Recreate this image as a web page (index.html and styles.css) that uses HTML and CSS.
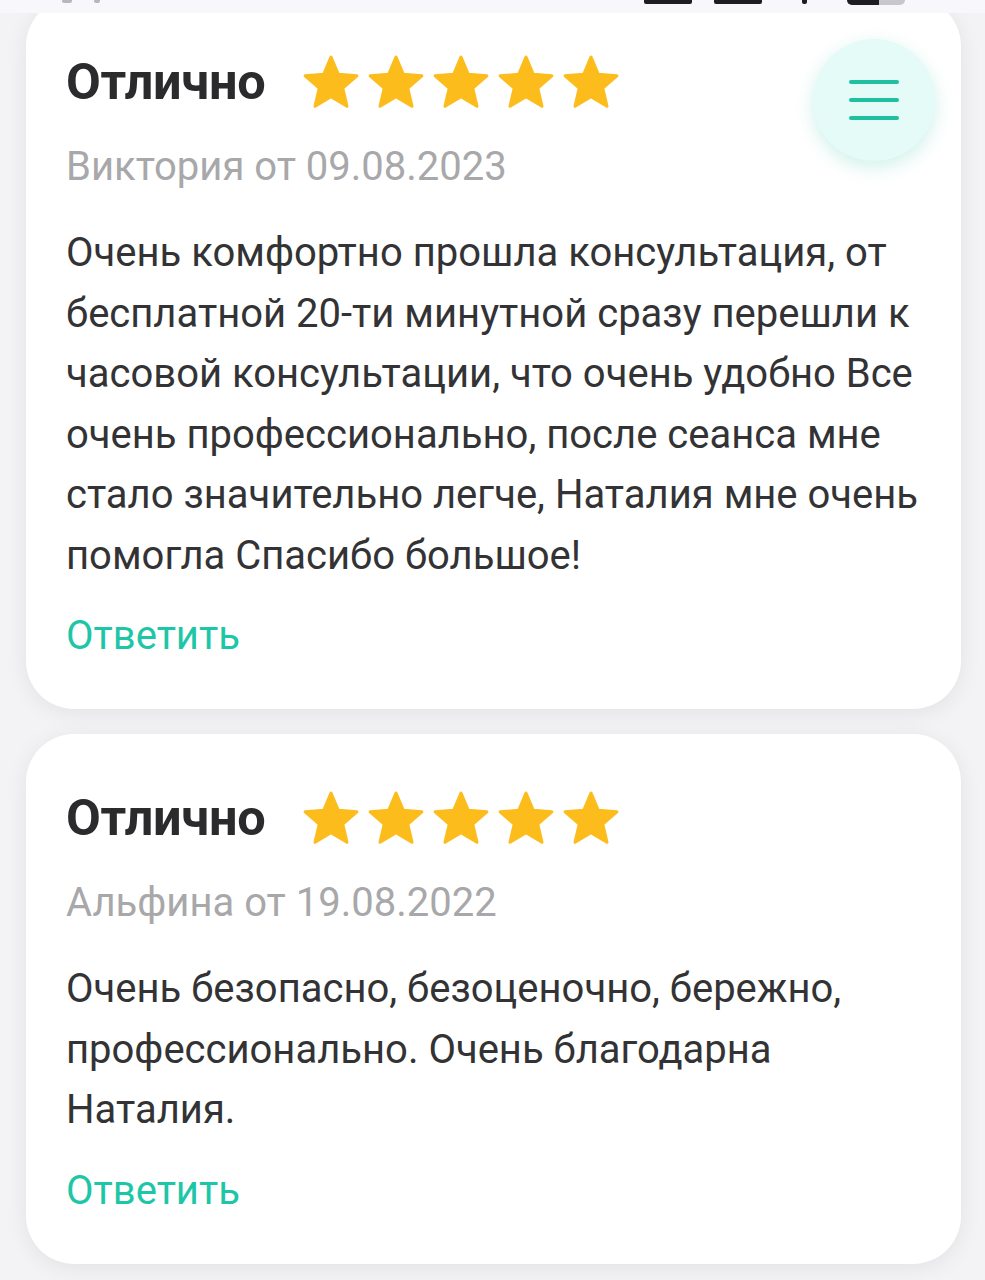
FILE: index.html
```html
<!DOCTYPE html>
<html lang="ru">
<head>
<meta charset="utf-8">
<title>Отзывы</title>
<link rel="stylesheet" href="styles.css">
</head>
<body>
<div class="statusbar">
  <div class="sb-left"><span class="sb-dot w10"></span><span class="sb-dot w6"></span></div>
  <div class="sb-right">
    <span class="sb-bit w48"></span>
    <span class="sb-bit w48"></span>
    <span class="sb-bit w5"></span>
    <span class="sb-batt"><span class="sb-batt-fill"></span></span>
  </div>
</div>

<button class="menu-btn" aria-label="Меню">
  <span class="bar"></span><span class="bar"></span><span class="bar"></span>
</button>

<main class="list">
  <article class="card">
    <header class="head">
      <h2 class="title">Отлично</h2>
      <div class="stars">
        <svg viewBox="0 0 24 24"><path d="M12 17.27L18.18 21l-1.64-7.03L22 9.24l-7.19-.61L12 2 9.19 8.63 2 9.24l5.46 4.730L5.82 21z"/></svg>
        <svg viewBox="0 0 24 24"><path d="M12 17.27L18.18 21l-1.64-7.03L22 9.24l-7.19-.61L12 2 9.19 8.63 2 9.24l5.46 4.73L5.82 21z"/></svg>
        <svg viewBox="0 0 24 24"><path d="M12 17.27L18.18 21l-1.64-7.03L22 9.24l-7.19-.61L12 2 9.19 8.63 2 9.24l5.46 4.73L5.82 21z"/></svg>
        <svg viewBox="0 0 24 24"><path d="M12 17.27L18.18 21l-1.64-7.03L22 9.24l-7.19-.61L12 2 9.19 8.63 2 9.24l5.46 4.73L5.82 21z"/></svg>
        <svg viewBox="0 0 24 24"><path d="M12 17.27L18.18 21l-1.64-7.03L22 9.24l-7.19-.61L12 2 9.19 8.63 2 9.24l5.46 4.73L5.82 21z"/></svg>
      </div>
    </header>
    <p class="meta">Виктория от 09.08.2023</p>
    <p class="text">Очень комфортно прошла консультация, от бесплатной 20-ти минутной сразу перешли к часовой консультации, что очень удобно Все очень профессионально, после сеанса мне стало значительно легче, Наталия мне очень помогла Спасибо большое!</p>
    <a class="reply" href="#">Ответить</a>
  </article>

  <article class="card">
    <header class="head">
      <h2 class="title">Отлично</h2>
      <div class="stars">
        <svg viewBox="0 0 24 24"><path d="M12 17.27L18.18 21l-1.64-7.03L22 9.24l-7.19-.61L12 2 9.19 8.63 2 9.24l5.46 4.73L5.82 21z"/></svg>
        <svg viewBox="0 0 24 24"><path d="M12 17.27L18.18 21l-1.64-7.03L22 9.24l-7.19-.61L12 2 9.19 8.63 2 9.24l5.46 4.73L5.82 21z"/></svg>
        <svg viewBox="0 0 24 24"><path d="M12 17.27L18.18 21l-1.64-7.03L22 9.24l-7.19-.61L12 2 9.19 8.63 2 9.24l5.46 4.73L5.82 21z"/></svg>
        <svg viewBox="0 0 24 24"><path d="M12 17.27L18.18 21l-1.64-7.03L22 9.24l-7.19-.61L12 2 9.19 8.63 2 9.24l5.46 4.73L5.82 21z"/></svg>
        <svg viewBox="0 0 24 24"><path d="M12 17.27L18.18 21l-1.64-7.03L22 9.24l-7.19-.61L12 2 9.19 8.63 2 9.24l5.46 4.73L5.82 21z"/></svg>
      </div>
    </header>
    <p class="meta">Альфина от 19.08.2022</p>
    <p class="text">Очень безопасно, безоценочно, бережно, профессионально. Очень благодарна Наталия.</p>
    <a class="reply" href="#">Ответить</a>
  </article>
</main>
</body>
</html>
```
FILE: styles.css
```css
* { box-sizing: border-box; }

html, body {
  margin: 0;
  padding: 0;
  background: #f3f3f5;
  font-family: Roboto, "Noto Sans", "Liberation Sans", sans-serif;
  -webkit-font-smoothing: antialiased;
}

.statusbar {
  position: fixed;
  top: 0;
  left: 0;
  right: 0;
  height: 13px;
  background: #f8f8fc;
  z-index: 10;
  display: flex;
  justify-content: space-between;
  padding: 0 80px 0 62px;
}
.sb-left, .sb-right { display: flex; gap: 22px; align-items: flex-start; }
.sb-dot { display: block; height: 3px; background: #b8b8bc; border-radius: 0 0 2px 2px; }
.sb-dot.w10 { width: 10px; }
.sb-dot.w6 { width: 6px; }
.sb-bit { display: block; height: 4px; background: #1e1e22; border-radius: 0 0 2px 2px; }
.sb-bit.w48 { width: 48px; }
.sb-bit.w5 { width: 5px; margin: 0 18px; }
.sb-batt {
  display: block; width: 58px; height: 5px;
  background: #c8c8cc; border-radius: 0 0 6px 6px; overflow: hidden;
}
.sb-batt-fill { display: block; width: 32px; height: 100%; background: #1e1e22; }

.menu-btn {
  position: fixed;
  top: 39px;
  left: 813px;
  width: 122px;
  height: 122px;
  border-radius: 50%;
  border: 0;
  padding: 0;
  background: #e4fbf7;
  box-shadow: 0 6px 18px rgba(40, 190, 160, 0.22);
  display: flex;
  flex-direction: column;
  align-items: center;
  justify-content: center;
  gap: 14px;
  z-index: 5;
  cursor: pointer;
}
.menu-btn .bar {
  display: block;
  width: 50px;
  height: 4px;
  border-radius: 2px;
  background: #1fbf9f;
}

.list {
  margin-top: -2px;
  padding: 0 24px 30px 26px;
  display: flex;
  flex-direction: column;
  gap: 25px;
}

.card {
  width: 935px;
  background: #fff;
  border-radius: 48px;
  box-shadow: 0 4px 22px rgba(0, 0, 0, 0.07);
  padding: 54px 30px 48px 40px;
}

.head {
  display: flex;
  align-items: center;
  gap: 35px;
  height: 60px;
}
.title {
  margin: 0;
  font-size: 50.5px;
  font-weight: 700;
  line-height: 60px;
  color: #2b2b2d;
  letter-spacing: -0.3px;
}
.stars {
  display: flex;
  gap: 3px;
  margin-top: 2px;
}
.stars svg {
  width: 62px;
  height: 62px;
  display: block;
}
.stars path {
  fill: #fcbd1c;
  stroke: #fcbd1c;
  stroke-width: 1.2;
  stroke-linejoin: round;
}

.meta {
  margin: 30px 0 0;
  font-size: 40px;
  line-height: 50px;
  color: #a8a8aa;
}

.text {
  margin: 31px 0 0;
  font-size: 40px;
  line-height: 60.5px;
  color: #333335;
}

.reply {
  display: block;
  margin-top: 25px;
  font-size: 40px;
  line-height: 50px;
  color: #1ec6a8;
  text-decoration: none;
}
```
